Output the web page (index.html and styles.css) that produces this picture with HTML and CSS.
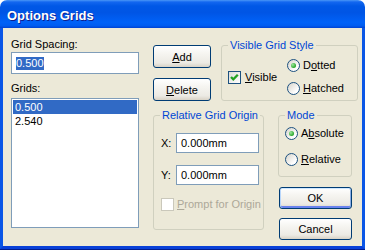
FILE: index.html
```html
<!DOCTYPE html>
<html lang="en">
<head>
  <meta charset="UTF-8">
  <title>Options Grids</title>
  <link rel="stylesheet" href="styles.css">
</head>
<body>
<div class="window">
  <div class="titlebar">Options Grids</div>
  <div class="client">
    <div class="left-col">
      <div class="label">Grid Spacing:</div>
      <div class="textbox"><span class="sel">0.500</span></div>
      <div class="label grids-label">Grids:</div>
      <div class="listbox">
        <div class="list-item selected">0.500</div>
        <div class="list-item">2.540</div>
      </div>
    </div>
    <div class="right-area">
      <div class="top-row">
        <div class="btn-col">
          <button class="btn"><u>A</u>dd</button>
          <button class="btn"><u>D</u>elete</button>
        </div>
        <fieldset class="group style-group">
          <legend>Visible Grid Style</legend>
          <div class="style-body">
            <label class="option check-visible">
              <span class="checkbox"><svg width="11" height="11" viewBox="0 0 11 11"><path d="M2 5 L4.3 7.3 L8.8 2.8" fill="none" stroke="#21A121" stroke-width="2.3"/></svg></span>
              <span><u>V</u>isible</span>
            </label>
            <div class="radio-col">
              <label class="option"><span class="radio on"></span><span>D<u>o</u>tted</span></label>
              <label class="option"><span class="radio"></span><span><u>H</u>atched</span></label>
            </div>
          </div>
        </fieldset>
      </div>
      <div class="bottom-row">
        <fieldset class="group origin-group">
          <legend>Relative Grid Origin</legend>
          <div class="origin-body">
            <div class="coord-row">
              <span class="coord-label">X:</span>
              <div class="textbox coord-input">0.000mm</div>
            </div>
            <div class="coord-row">
              <span class="coord-label">Y:</span>
              <div class="textbox coord-input">0.000mm</div>
            </div>
            <label class="option prompt"><span class="checkbox disabled"></span><span><u>P</u>rompt for Origin</span></label>
          </div>
        </fieldset>
        <div class="side-col">
          <fieldset class="group mode-group">
            <legend>Mode</legend>
            <div class="mode-body">
              <label class="option"><span class="radio on"></span><span>A<u>b</u>solute</span></label>
              <label class="option"><span class="radio"></span><span><u>R</u>elative</span></label>
            </div>
          </fieldset>
          <button class="btn dlg-btn default">OK</button>
          <button class="btn dlg-btn cancel">Cancel</button>
        </div>
      </div>
    </div>
  </div>
</div>
</body>
</html>
```

FILE: styles.css
```css
body { margin: 0; background: #fff; font-family: "Liberation Sans", Arial, sans-serif; font-size: 11px; color: #000; }
.window { width: 365px; height: 250px; box-sizing: border-box; display: flex; flex-direction: column; border-bottom: 1px solid #001c8e; }
.titlebar { height: 28px; flex: none; box-sizing: border-box; padding: 3px 0 0 7px; border-radius: 7px 7px 0 0; line-height: 25px; font-size: 13px; font-weight: bold; color: #fff; text-shadow: 1px 1px #0f1e8c; background: linear-gradient(to bottom, #4a97f6 0, #1367f0 2px, #0058e6 6px, #0055e5 45%, #0062f8 80%, #005cf0 92%, #0042d2 100%); }
.client { flex: 1; display: flex; gap: 14px; padding: 10px 0 0 8px; background: #ece9d8; border-style: solid; border-width: 0 3px 3px; border-color: #0a56e6; border-bottom-color: #0840d8; }

.left-col { width: 128px; display: flex; flex-direction: column; }
.label { line-height: 13px; }
.grids-label { margin-top: 8px; }
.textbox { height: 22px; box-sizing: border-box; margin-top: 1px; padding-left: 4px; border: 1px solid #7f9db9; background: #fff; display: flex; align-items: center; }
.sel { background: #316ac5; color: #fff; line-height: 13px; }
.listbox { margin-top: 3px; height: 130px; box-sizing: border-box; padding: 1px; border: 1px solid #7f9db9; background: #fff; }
.list-item { line-height: 14px; padding-left: 2px; }
.list-item.selected { background: #316ac5; color: #fff; }

.right-area { display: flex; flex-direction: column; }
.top-row { display: flex; gap: 10px; }
.btn-col { display: flex; flex-direction: column; gap: 10px; margin-top: 7px; }
.btn { width: 58px; height: 23px; box-sizing: border-box; padding: 0; border: 1px solid #003c74; border-radius: 3px; font: 11px "Liberation Sans", Arial, sans-serif; color: #000; background: linear-gradient(to bottom, #fff 0, #f6f5f1 35%, #eceae4 80%, #d8d2c6 100%); }

.group { margin: 0; padding: 0; box-sizing: border-box; min-width: 0; border: 1px solid #d0d0bf; border-radius: 3px; }
.group legend { margin-left: 6px; padding: 0 2px; line-height: 14px; color: #0046d5; }
.style-group { width: 137px; }
.style-body { display: flex; align-items: center; padding: 7px 0 4px 6px; }
.option { display: flex; align-items: center; gap: 3px; line-height: 13px; }
.check-visible { width: 59px; gap: 4px; }
.radio-col { display: flex; flex-direction: column; gap: 10px; }

.checkbox { width: 13px; height: 13px; box-sizing: border-box; flex: none; border: 1px solid #1c5180; background: linear-gradient(135deg, #dcdcd7, #fff); display: flex; align-items: center; justify-content: center; }
.checkbox.disabled { border-color: #cac8bb; background: #fff; }
.radio { width: 13px; height: 13px; box-sizing: border-box; flex: none; border: 1px solid #1c5180; border-radius: 50%; background: linear-gradient(135deg, #d6d3ca, #fff 75%); display: flex; align-items: center; justify-content: center; }
.radio.on::after { content: ""; width: 5px; height: 5px; border-radius: 50%; background: radial-gradient(circle at 35% 35%, #9ee89e, #21a121 75%); }

.bottom-row { display: flex; align-items: flex-start; gap: 14px; margin-top: 7px; }
.origin-group { width: 111px; }
.origin-body { display: flex; flex-direction: column; padding: 11px 0 18px 7px; }
.coord-row { display: flex; align-items: center; }
.coord-row + .coord-row { margin-top: 12px; }
.coord-label { width: 15px; line-height: 13px; }
.coord-input { width: 83px; height: 20px; margin-top: 0; }
.prompt { margin-top: 13px; color: #aca899; }

.side-col { width: 74px; display: flex; flex-direction: column; align-items: flex-end; }
.mode-group { width: 74px; }
.mode-body { display: flex; flex-direction: column; gap: 13px; padding: 5px 0 10px 6px; }
.dlg-btn { width: 73px; height: 22px; }
.default { margin-top: 10px; box-shadow: inset 0 1px #cee7ff, inset 1px 0 #b8d6fb, inset -1px 0 #89ade4, inset 0 -2px #6982ee; }
.cancel { margin-top: 9px; }
```
